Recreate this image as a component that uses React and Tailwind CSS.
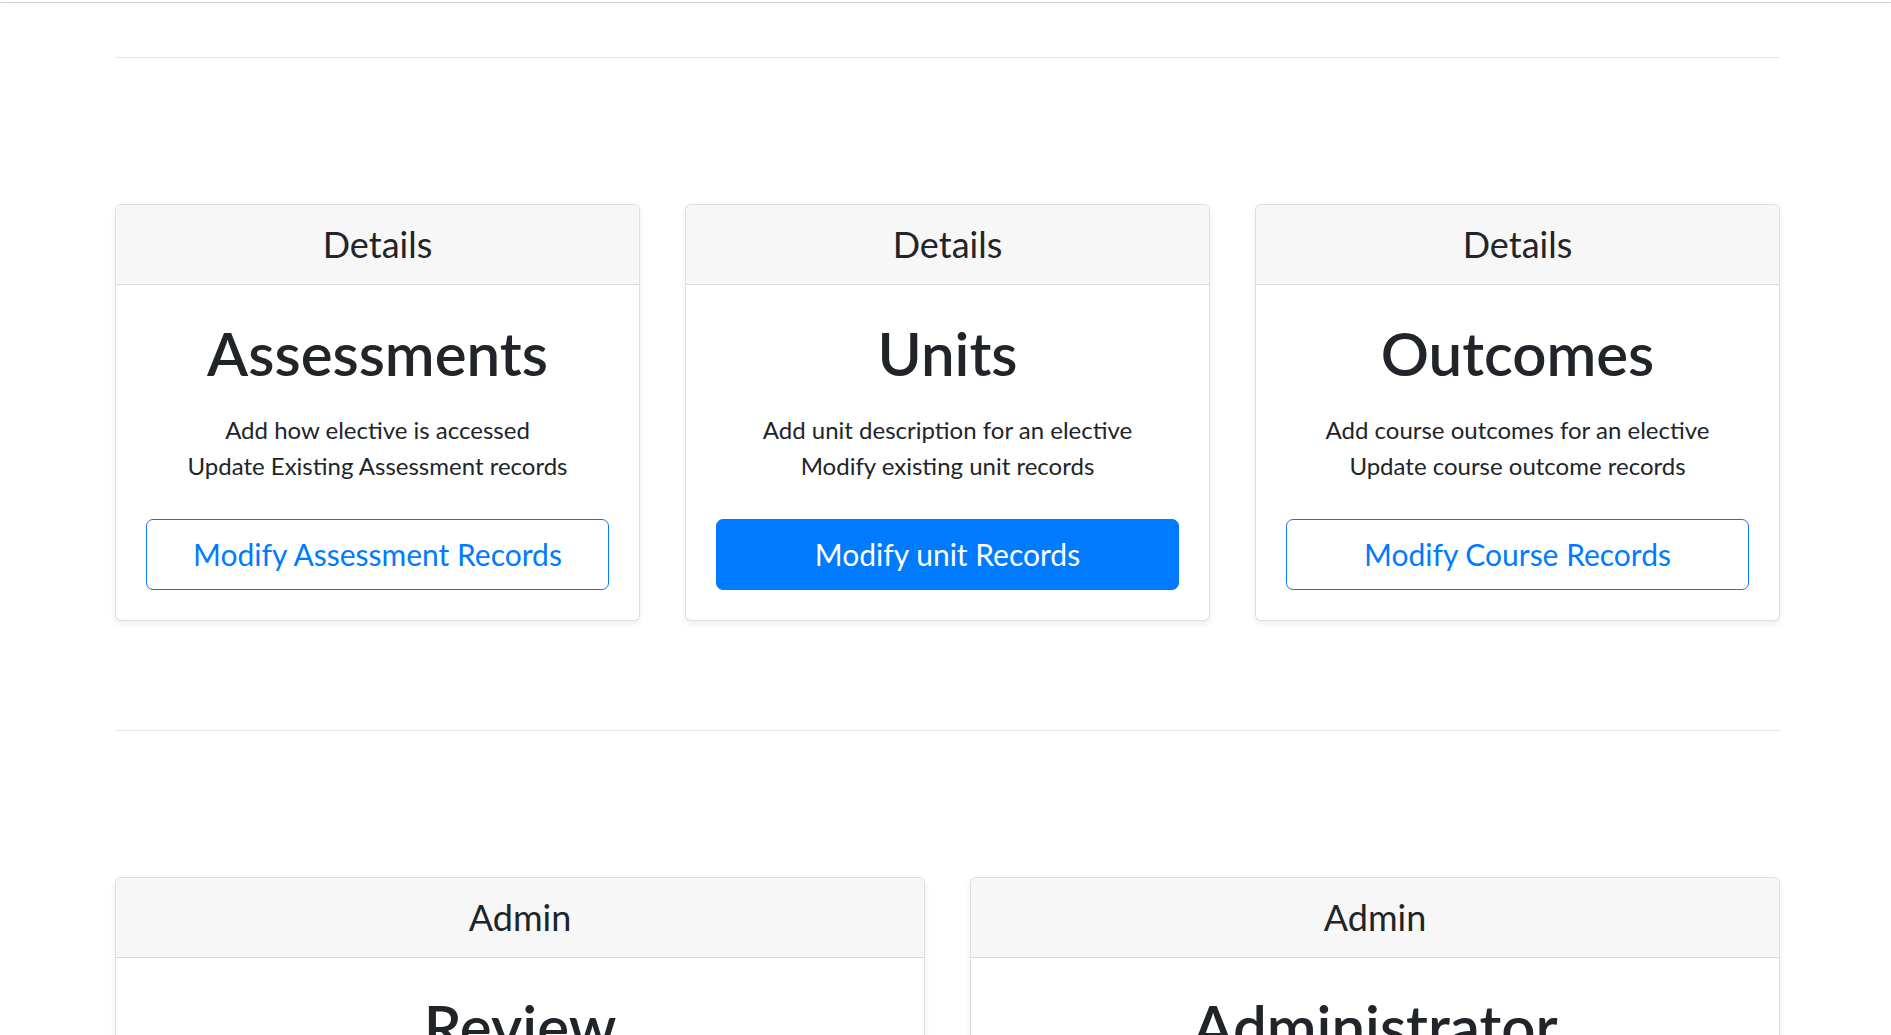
import React from 'react';

const detailCards = [
    {
        title: 'Assessments',
        lines: ['Add how elective is accessed', 'Update Existing Assessment records'],
        action: 'Modify Assessment Records',
        primary: false,
    },
    {
        title: 'Units',
        lines: ['Add unit description for an elective', 'Modify existing unit records'],
        action: 'Modify unit Records',
        primary: true,
    },
    {
        title: 'Outcomes',
        lines: ['Add course outcomes for an elective', 'Update course outcome records'],
        action: 'Modify Course Records',
        primary: false,
    },
];

const adminCards = [
    {
        title: 'Review',
        lines: ['Review submitted elective records', 'Approve or reject changes'],
        action: 'Review Records',
        primary: false,
    },
    {
        title: 'Administrator',
        lines: ['Manage users and permissions', 'Update system settings'],
        action: 'Open Administrator',
        primary: false,
    },
];

const Card = ({ header, card }) => (
    <div className="bg-white border border-[rgba(0,0,0,0.125)] rounded-[6px] shadow-[0_3px_6px_rgba(0,0,0,0.075)] text-center text-[#212529]">
        {/* Header */}
        <div className="px-[30px] py-[18px] bg-[#f7f7f7] border-b border-[rgba(0,0,0,0.125)] rounded-t-[5px]">
            <h4 className="text-[36px] leading-[1.2] font-normal">{header}</h4>
        </div>

        {/* Body */}
        <div className="p-[30px]">
            <h1 className="pt-[2px] text-[60px] leading-[1.2] font-semibold mb-[23px]">{card.title}</h1>
            <ul className="text-[24px] leading-[36px] mb-[35px]">
                {card.lines.map((line) => (
                    <li key={line}>{line}</li>
                ))}
            </ul>
            <button
                className={`w-full px-[24px] py-[12px] text-[30px] leading-[1.5] border border-[#007bff] rounded-[7px] ${card.primary
                    ? 'bg-[#007bff] text-white'
                    : 'bg-white text-[#007bff]'}`}
            >
                {card.action}
            </button>
        </div>
    </div>
);

const App = () => {
    return (
        <div className="min-h-screen bg-white font-['Lato',sans-serif]">
            {/* Navbar edge */}
            <div className="h-[3px] border-b border-[#d2d2d2] shadow-[0_2px_4px_rgba(0,0,0,0.04)]"></div>

            <div className="ml-[115px] w-[1665px]">
                <hr className="mt-[54px] border-t border-[rgba(0,0,0,0.1)]" />

                <div className="grid grid-cols-3 gap-[45px] mt-[146px]">
                    {detailCards.map((c) => (
                        <Card key={c.title} header="Details" card={c} />
                    ))}
                </div>

                <hr className="mt-[109px] border-t border-[rgba(0,0,0,0.1)]" />

                <div className="grid grid-cols-2 gap-[45px] mt-[146px] pb-[60px]">
                    {adminCards.map((c) => (
                        <Card key={c.title} header="Admin" card={c} />
                    ))}
                </div>
            </div>
        </div>
    );
};

export default App;
